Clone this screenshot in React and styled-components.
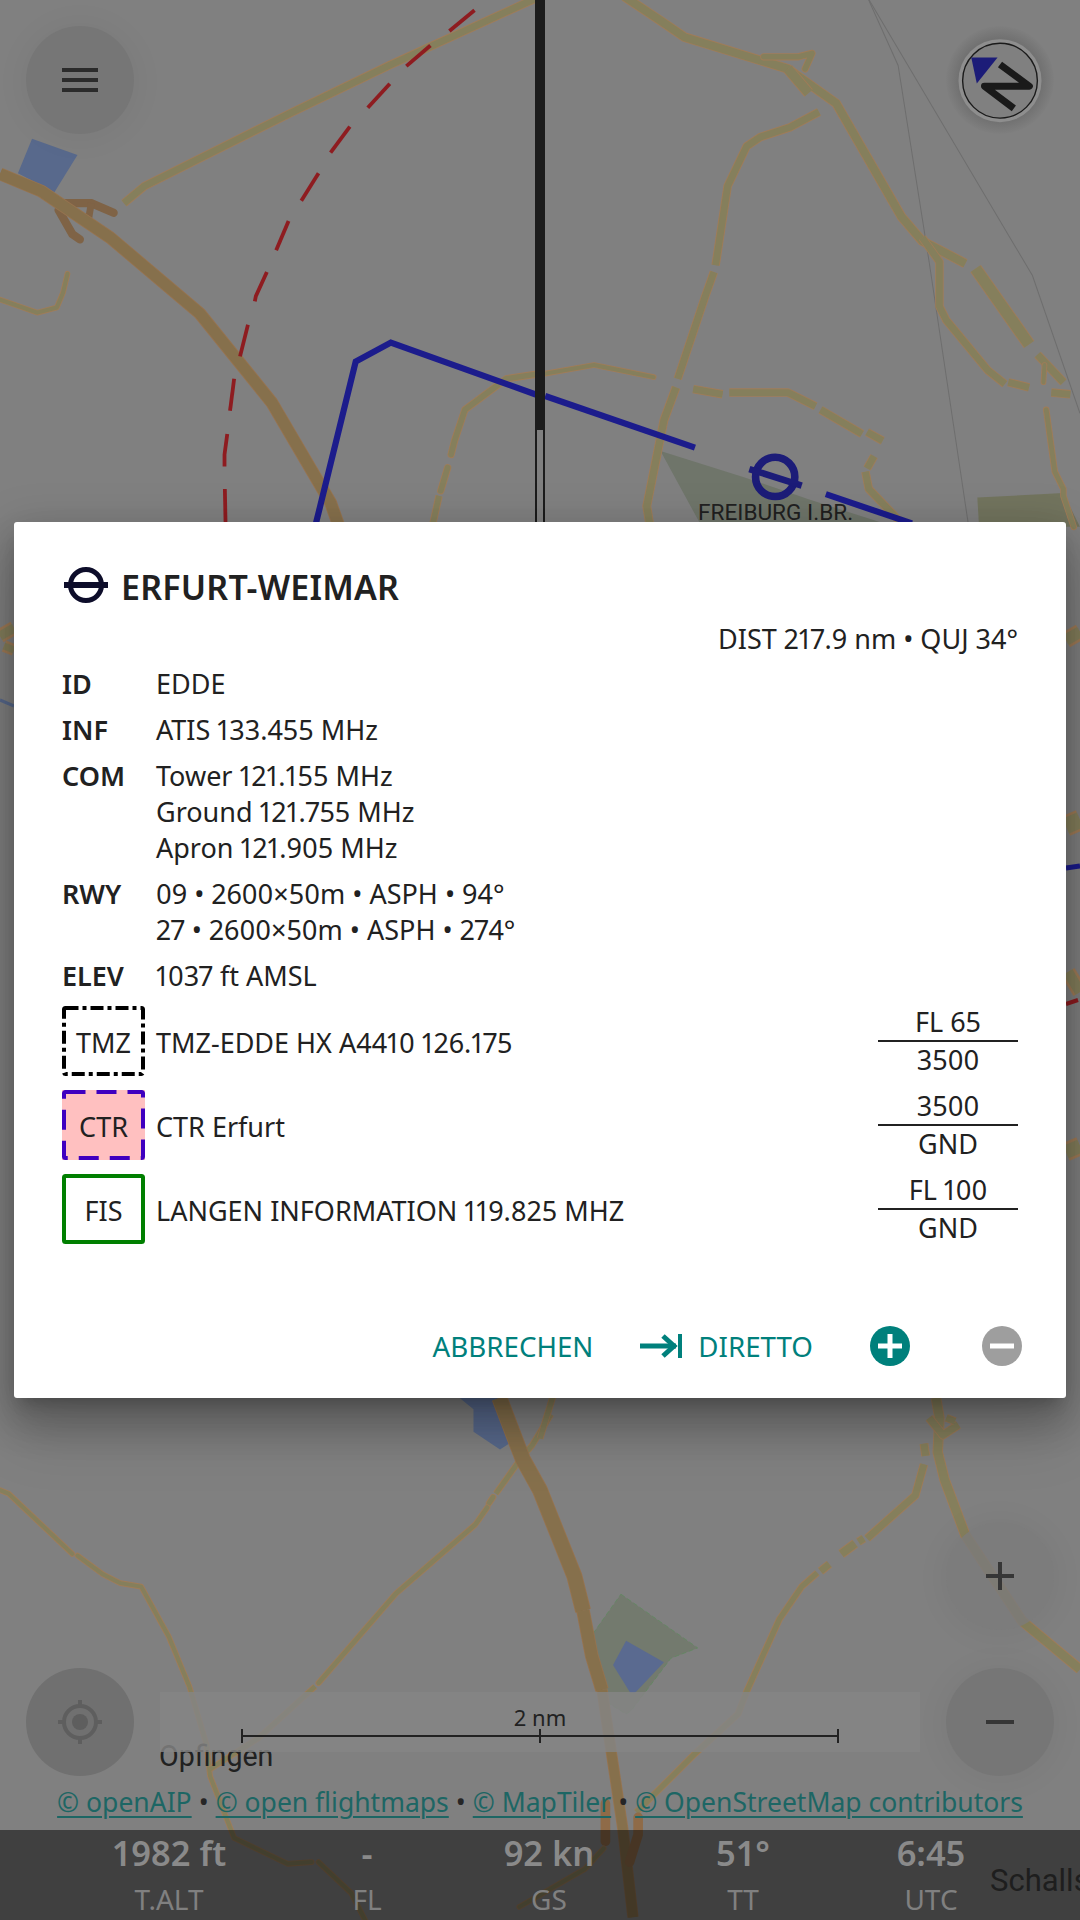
import React from "react";
import styled, { createGlobalStyle } from "styled-components";

const Global = createGlobalStyle`
  html, body { margin: 0; padding: 0; background: #808080; }
  body { font-family: "Noto Sans", "Open Sans", sans-serif; color: #212121; }
  a { color: inherit; }
`;

const Stage = styled.div`
  position: relative;
  width: 1080px;
  height: 1920px;
  overflow: hidden;
  background: #808080;
`;

const MapCanvas = styled.svg`
  position: absolute;
  inset: 0;
  display: block;
`;

const Hud = styled.div`
  position: absolute;
  inset: 0;
  display: flex;
  flex-direction: column;
`;

const TopRow = styled.div`
  display: flex;
  justify-content: space-between;
  align-items: center;
  padding: 26px 26px 0;
`;

const Spacer = styled.div`
  flex: 1;
`;

const RoundButton = styled.div`
  width: 108px;
  height: 108px;
  border-radius: 50%;
  display: flex;
  align-items: center;
  justify-content: center;
  flex: none;
  background: ${(p) => p.$bg || "rgba(116,116,116,.88)"};
  box-shadow: ${(p) => (p.$flat ? "none" : "0 2px 24px 10px rgba(0,0,0,.03)")};
`;

const CompassButton = styled.div`
  width: 108px;
  height: 108px;
  border-radius: 50%;
  display: flex;
  align-items: center;
  justify-content: center;
  background: radial-gradient(circle, rgba(110,110,110,.8) 55%, rgba(128,128,128,0) 72%);
`;

const PlusRow = styled.div`
  display: flex;
  justify-content: flex-end;
  padding: 0 26px;
  margin-bottom: 38px;
`;

const ControlRow = styled.div`
  display: flex;
  align-items: center;
  gap: 26px;
  padding: 0 26px;
  height: 108px;
`;

const ScaleBox = styled.div`
  flex: 1;
  height: 60px;
  background: rgba(133, 133, 133, 0.82);
  position: relative;
  display: flex;
  flex-direction: column;
  align-items: center;
`;

const ScaleLabel = styled.div`
  font-size: 22px;
  line-height: 28px;
  margin-top: 11px;
  color: #212121;
`;

const ScaleRule = styled.div`
  position: relative;
  width: 596px;
  height: 2px;
  margin-top: 4px;
  background: #212121;
`;

const ScaleTick = styled.span`
  position: absolute;
  top: -6px;
  left: ${(p) => p.$at}%;
  width: 2px;
  height: 14px;
  margin-left: -1px;
  background: #212121;
`;

const Attribution = styled.div`
  height: 54px;
  display: flex;
  align-items: center;
  justify-content: center;
  font-size: 26.5px;
  color: #262626;
  white-space: nowrap;
  padding-bottom: 2px;
  box-sizing: border-box;
`;

const AttrLink = styled.a`
  color: #1d6664;
  text-decoration: underline;
  text-decoration-thickness: 2px;
  text-underline-offset: 4px;
  margin: 0 7px;
`;

const StatusBar = styled.div`
  height: 90px;
  flex: none;
  padding-left: 70px;
  display: grid;
  grid-template-columns: 198px 198px 166px 222px 154px;
  background: rgba(0, 0, 0, 0.5);
`;

const Stat = styled.div`
  text-align: center;
  color: #8a8a8a;
`;

const StatValue = styled.div`
  font-size: 34.5px;
  font-weight: 600;
  line-height: 44px;
  margin-top: 1px;
  white-space: nowrap;
`;

const StatLabel = styled.div`
  font-size: 28px;
  line-height: 36px;
  margin-top: 6px;
  color: #808080;
`;

const DialogLayer = styled.div`
  position: absolute;
  inset: 0;
  display: flex;
  align-items: center;
  justify-content: center;
`;

const Dialog = styled.div`
  width: 1052px;
  height: 876px;
  box-sizing: border-box;
  padding-top: 41px;
  display: flex;
  flex-direction: column;
  background: #fff;
  border-radius: 3px;
  font-variant-numeric: proportional-nums;
  box-shadow: 0 11px 15px -7px rgba(0, 0, 0, 0.2), 0 24px 38px 3px rgba(0, 0, 0, 0.14),
    0 9px 46px 8px rgba(0, 0, 0, 0.12), 0 40px 60px 0 rgba(0, 0, 0, 0.12);
`;

const Title = styled.div`
  display: flex;
  align-items: center;
  gap: 13px;
  height: 44px;
  padding: 0 50px;
  font-size: 34px;
  font-weight: 600;
  letter-spacing: 0.2px;
`;

const TitleText = styled.span`
  padding-top: 3px;
`;

const Distance = styled.div`
  margin-top: 14px;
  padding: 0 48px;
  text-align: right;
  font-size: 27px;
  line-height: 36px;
`;

const InfoList = styled.div`
  margin-top: 9px;
  padding: 0 48px;
  display: flex;
  flex-direction: column;
  gap: 10px;
`;

const InfoRow = styled.div`
  display: grid;
  grid-template-columns: 94px 1fr;
  font-size: 27px;
  line-height: 36px;
`;

const InfoKey = styled.div`
  font-weight: 600;
`;

const AirspaceList = styled.div`
  margin-top: 12px;
  padding: 0 48px;
  display: flex;
  flex-direction: column;
  gap: 14px;
`;

const AirspaceRow = styled.div`
  display: grid;
  grid-template-columns: 83px 1fr 140px;
  column-gap: 11px;
  align-items: center;
  height: 70px;
  font-size: 27px;
`;

const AirspaceName = styled.div`
  padding-top: 2px;
`;

const Badge = styled.div`
  position: relative;
  height: 70px;
  box-sizing: border-box;
  padding-top: 2px;
  display: flex;
  align-items: center;
  justify-content: center;
  background: ${(p) => p.$fill || "transparent"};
`;

const BadgeFrame = styled.svg`
  position: absolute;
  inset: 0;
`;

const Limits = styled.div`
  text-align: center;
`;

const LimitTop = styled.div`
  border-bottom: 2px solid #212121;
  height: 34px;
  line-height: 32px;
`;

const LimitBottom = styled.div`
  height: 34px;
  line-height: 36px;
`;

const Footer = styled.div`
  margin-top: auto;
  height: 40px;
  margin-bottom: 32px;
  padding-right: 44px;
  display: flex;
  justify-content: flex-end;
  align-items: center;
`;

const TextAction = styled.div`
  display: flex;
  align-items: center;
  gap: 16px;
  margin-right: ${(p) => p.$after}px;
  color: #00807c;
  font-size: 27.7px;
  white-space: nowrap;
`;

const CircleAction = styled.div`
  position: relative;
  width: 40px;
  height: 40px;
  border-radius: 50%;
  margin-right: ${(p) => p.$after || 0}px;
  background: ${(p) => p.$bg};
  display: flex;
  align-items: center;
  justify-content: center;
`;

const Road = ({ p, w = 14, c = "#857f5c", e = "#a07c58", cap = "butt" }) => (
  <>
    <polyline points={p} fill="none" stroke={e} strokeWidth={w * 1.15 + 5} strokeLinecap={cap} strokeLinejoin="round" />
    <polyline points={p} fill="none" stroke={c} strokeWidth={w * 1.15} strokeLinecap={cap} strokeLinejoin="round" />
  </>
);

const Line = ({ p, w, c, cap = "butt" }) => (
  <polyline points={p} fill="none" stroke={c} strokeWidth={w} strokeLinecap={cap} strokeLinejoin="miter" />
);

const S = 1 / 2.904;
const BROWN = "#86704c";
const BROWN_EDGE = "#96734f";
const BLUE = "#1c1c8c";
const RED = "#8e1c20";

const redDashes = [
  "1378,30 1305,90", "1250,132 1180,192", "1132,243 1068,313", "1016,368 960,443", "925,503 875,583",
  "838,642 802,727", "775,790 743,860 740,875", "720,943 697,1035", "680,1100 668,1193",
  "660,1260 652,1320 652,1355", "653,1420 655,1520",
];

const q1 = () => (
  <g transform={`scale(${S})`}>
    <polygon points="93,403 225,450 158,558 52,503" fill="#58698c" />
    <Road p="360,590 420,540 600,450 850,325 1130,190 1600,-25" w={17} />
    <Line p="170,590 265,590 330,618" w={24} c="#7f6346" cap="round" />
    <Line p="265,590 255,650" w={20} c="#7f6346" />
    <Line p="170,610 210,680 232,695" w={24} c="#7f6346" cap="round" />
    <Road p="0,505 120,555 320,690 580,910 790,1170 960,1460 985,1530" w={28} c={BROWN} e={BROWN_EDGE} />
    <Road p="196,795 183,850 165,893 108,908 0,870" w={10} cap="round" />
    <Road p="1568,1085 1470,1100 1350,1190 1320,1280 1310,1320" w={14} cap="round" />
    <Road p="1300,1358 1280,1425" w={14} cap="round" />
    <Road p="1275,1440 1255,1530" w={14} />
    {redDashes.map((d) => (
      <Line key={d} p={d} w={11} c={RED} />
    ))}
    <Line p="915,1530 1033,1050 1135,995 1568,1150" w={18} c={BLUE} />
  </g>
);

const q2 = () => (
  <g transform={`translate(540,0) scale(${S})`}>
    <polygon points="350,1310 590,1385 780,1450 1000,1520 470,1530" fill="#6f756a" />
    <polygon points="1270,1445 1520,1432 1568,1530 1275,1530" fill="#72745e" />
    <Line p="950,-10 1040,190 1130,760 1245,1530" w={3} c="#6e6e6e" />
    <Line p="950,-10 1430,800 1568,1200" w={3} c="#6e6e6e" />
    <Road p="245,-10 350,60 420,108 720,200 860,300 1050,630 1110,700 1235,765" w={20} />
    <Road p="1265,780 1420,1000" w={28} />
    <Road p="1445,1030 1520,1110" w={18} />
    <Road p="650,165 750,165 790,155 770,200" w={14} cap="round" />
    <Road p="720,200 780,270" w={24} />
    <Road p="810,325 725,370 640,398 600,425 545,540 510,770" w={17} />
    <Road p="505,790 480,860 400,1100" w={17} />
    <Road p="395,1125 360,1220 310,1470 320,1530" w={18} />
    <Road p="15,1085 157,1060 330,1095" w={10} cap="round" />
    <Road p="445,1130 530,1145" w={17} />
    <Road p="550,1140 720,1140 800,1180" w={17} />
    <Road p="815,1190 935,1260" w={17} />
    <Road p="950,1255 995,1280" w={17} />
    <Road p="970,1325 950,1360" w={17} />
    <Road p="945,1370 955,1420 1060,1530" w={17} />
    <Road p="1110,690 1160,760 1160,890 1180,930 1300,1075 1350,1115" w={17} />
    <Road p="1360,1110 1420,1125" w={17} />
    <Road p="1485,1140 1540,1145" w={17} />
    <Road p="1465,1060 1462,1110" w={10} cap="round" />
    <Road p="1470,1190 1495,1370 1520,1420 1520,1440 1550,1530" w={12} cap="round" />
    <Line p="15,1150 450,1300" w={18} c={BLUE} />
    <Line p="830,1435 1080,1520" w={18} c={BLUE} />
    <circle cx="683" cy="1385" r="57" fill="none" stroke="#1c1c78" strokeWidth="22" />
    <Line p="608,1362 760,1410" w={19} c="#1c1c78" />
  </g>
);

const q3 = () => (
  <g transform={`translate(0,1380) scale(${S})`}>
    <polygon points="1335,52 1375,85 1375,150 1452,202 1488,178 1450,52" fill="#58698c" />
    <Road p="0,320 25,330 210,505" w={10} cap="round" />
    <Road p="225,510 300,565 350,590 410,600 490,745 550,890 600,1060 610,1150 680,1330 835,1405 905,1400" w={10} cap="round" />
    <Road p="925,1400 1020,1490 1060,1568" w={10} cap="round" />
    <Road p="1600,100 1545,190 1515,225 1440,330" w={12} />
    <Road p="1432,340 1420,358" w={12} cap="round" />
    <Road p="1415,370 1380,420 1150,620 925,880" w={11} cap="round" />
    <Road p="915,890 750,1040 610,1130" w={11} />
    <text x="462" y="1120" fontFamily="Roboto, sans-serif" fontSize="83" fill="#212121">Opfingen</text>
  </g>
);

const q4 = () => (
  <g transform={`translate(540,1380) scale(${S})`}>
    <polygon points="235,622 458,778 380,808 265,960 250,970 185,930 155,735" fill="#737a6e" stroke="#5c8a5c" strokeWidth="2" strokeDasharray="14 8" />
    <polygon points="250,757 360,820 275,910 262,908 212,828" fill="#5a6a90" />
    <Road p="-118,52 -50,230 0,320 100,570 125,670" w={36} c={BROWN} e={BROWN_EDGE} />
    <Road p="125,670 150,800 180,900" w={30} c={BROWN} e={BROWN_EDGE} />
    <Road p="180,900 240,1300 270,1560" w={24} c={BROWN} e={BROWN_EDGE} />
    <Road p="40,40 0,170" w={13} />
    <Road p="1150,52 1160,110 1155,210 1175,290 1235,450 1400,700 1568,840" w={22} />
    <Road p="1130,110 1170,160 1215,130" w={18} />
    <Road p="1180,110 1205,120" w={16} />
    <Road p="1115,185 1120,220" w={18} />
    <Road p="1115,245 1090,335 950,460" w={17} />
    <Road p="940,460 925,470" w={17} />
    <Road p="915,475 875,505" w={20} />
    <Road p="840,535 815,555" w={17} />
    <Road p="805,560 760,600 695,695 600,905 575,970 450,1085 280,1255" w={13} />
    <Line p="190,1230 190,1340" w={28} c="#8f6b48" cap="round" />
    <Line p="285,1270 285,1320 260,1400" w={28} c="#8f6b48" cap="round" />
    <Road p="185,1360 130,1420 -60,1530" w={10} cap="round" />
  </g>
);

const MapLayer = () => (
  <MapCanvas width="1080" height="1920" viewBox="0 0 1080 1920">
    <Road p="1066,640 1080,632" w={10} />
    <Road p="1066,826 1080,820" w={14} />
    <Road p="1066,1152 1080,1146" w={12} />
    <Line p="1066,868 1080,866" w={5} c={BLUE} />
    <Line p="1066,1004 1078,1000" w={4} c={RED} />
    <Road p="1068,972 1080,992" w={9} />
    <Road p="0,636 14,628" w={8} />
    <Road p="4,646 14,650" w={6} />
    <Line p="0,700 14,706" w={3} c="#58698c" />
    {q1()}
    {q2()}
    {q3()}
    {q4()}
    <rect x="535" y="0" width="10" height="523" fill="#1c1c1c" />
    <rect x="537" y="430" width="6" height="93" fill="#808080" />
    <text x="698" y="520" fontFamily="Roboto, sans-serif" fontSize="22.6" fill="#212121">FREIBURG I.BR.</text>
    <text x="990" y="1891" fontFamily="Roboto, sans-serif" fontSize="31" fill="#3c3c3c">Schallstadt</text>
  </MapCanvas>
);

const MenuIcon = () => (
  <svg width="36" height="24" viewBox="0 0 36 24">
    <path d="M0 2h36M0 12h36M0 22h36" stroke="#2b2b2b" strokeWidth="4" />
  </svg>
);

const Compass = () => (
  <svg width="90" height="90" viewBox="1205 100 260 260">
    <circle cx="1335" cy="232" r="120" fill="#8e8e8e" />
    <circle cx="1335" cy="232" r="108" fill="#808080" stroke="#1a1a1a" strokeWidth="4" />
    <polygon points="1252,165 1328,165 1268,240" fill="#1c1c78" />
    <polyline points="1335,185 1420,248 1290,248 1375,312" fill="none" stroke="#1a1a1a" strokeWidth="20" strokeLinejoin="round" />
  </svg>
);

const LocateIcon = () => (
  <svg width="44" height="44" viewBox="0 0 44 44" fill="none" stroke="#5e5e5e">
    <circle cx="22" cy="22" r="16" strokeWidth="4" />
    <circle cx="22" cy="22" r="8" fill="#5e5e5e" stroke="none" />
    <path d="M22 0v7M22 37v7M0 22h7M37 22h7" strokeWidth="4" />
  </svg>
);

const ZoomIcon = ({ plus }) => (
  <svg width="28" height="28" viewBox="0 0 28 28">
    <path d={plus ? "M0 14h28M14 0v28" : "M0 14h28"} stroke="#363636" strokeWidth="4" />
  </svg>
);

const AirportIcon = () => (
  <svg width="44" height="36" viewBox="0 0 44 36" fill="none" stroke="#0d0d2a">
    <circle cx="22" cy="18" r="15.5" strokeWidth="5" />
    <path d="M0 18h44" strokeWidth="6" />
  </svg>
);

const DirectIcon = () => (
  <svg width="42" height="24" viewBox="0 0 42 24" fill="none" stroke="#00807c">
    <path d="M0 12h36" strokeWidth="5" />
    <path d="M23 2l11 10-11 10" strokeWidth="5" />
    <path d="M40 0v24" strokeWidth="4" />
  </svg>
);

const Glyph = ({ plus }) => (
  <svg width="24" height="24" viewBox="0 0 24 24">
    <path d={plus ? "M0 12h24M12 0v24" : "M0 12h24"} stroke="#fff" strokeWidth="5" />
  </svg>
);

const Frame = ({ color, dash }) => (
  <BadgeFrame width="83" height="70" viewBox="0 0 83 70">
    <rect x="2" y="2" width="79" height="66" rx="1.5" fill="none" stroke={color} strokeWidth="4" strokeDasharray={dash} />
  </BadgeFrame>
);

const info = [
  ["ID", ["EDDE"]],
  ["INF", ["ATIS 133.455 MHz"]],
  ["COM", ["Tower 121.155 MHz", "Ground 121.755 MHz", "Apron 121.905 MHz"]],
  ["RWY", ["09 • 2600×50m • ASPH • 94°", "27 • 2600×50m • ASPH • 274°"]],
  ["ELEV", ["1037 ft AMSL"]],
];

const airspaces = [
  { code: "TMZ", name: "TMZ-EDDE HX A4410 126.175", top: "FL 65", bottom: "3500", color: "#000", dash: "13 4 4 4" },
  { code: "CTR", name: "CTR Erfurt", top: "3500", bottom: "GND", color: "#3f00c0", dash: "20 11", fill: "#ffc0c0" },
  { code: "FIS", name: "LANGEN INFORMATION 119.825 MHZ", top: "FL 100", bottom: "GND", color: "#007f00" },
];

const stats = [
  ["1982 ft", "T.ALT"],
  ["-", "FL"],
  ["92 kn", "GS"],
  ["51°", "TT"],
  ["6:45", "UTC"],
];

const links = ["© openAIP", "© open flightmaps", "© MapTiler", "© OpenStreetMap contributors"];

export default function App() {
  return (
    <Stage>
      <Global />
      <MapLayer />
      <Hud>
        <TopRow>
          <RoundButton>
            <MenuIcon />
          </RoundButton>
          <CompassButton>
            <Compass />
          </CompassButton>
        </TopRow>
        <Spacer />
        <PlusRow>
          <RoundButton $bg="rgba(122,122,122,.8)">
            <ZoomIcon plus />
          </RoundButton>
        </PlusRow>
        <ControlRow>
          <RoundButton $flat $bg="#707070">
            <LocateIcon />
          </RoundButton>
          <ScaleBox>
            <ScaleLabel>2 nm</ScaleLabel>
            <ScaleRule>
              <ScaleTick $at={0} />
              <ScaleTick $at={50} />
              <ScaleTick $at={100} />
            </ScaleRule>
          </ScaleBox>
          <RoundButton>
            <ZoomIcon />
          </RoundButton>
        </ControlRow>
        <Attribution>
          {links.map((l, i) => (
            <React.Fragment key={l}>
              {i > 0 && "•"}
              <AttrLink href="#">{l}</AttrLink>
            </React.Fragment>
          ))}
        </Attribution>
        <StatusBar>
          {stats.map(([v, l]) => (
            <Stat key={l}>
              <StatValue>{v}</StatValue>
              <StatLabel>{l}</StatLabel>
            </Stat>
          ))}
        </StatusBar>
      </Hud>
      <DialogLayer>
        <Dialog>
          <Title>
            <AirportIcon />
            <TitleText>ERFURT-WEIMAR</TitleText>
          </Title>
          <Distance>DIST 217.9 nm • QUJ 34°</Distance>
          <InfoList>
            {info.map(([k, lines]) => (
              <InfoRow key={k}>
                <InfoKey>{k}</InfoKey>
                <div>
                  {lines.map((t) => (
                    <div key={t}>{t}</div>
                  ))}
                </div>
              </InfoRow>
            ))}
          </InfoList>
          <AirspaceList>
            {airspaces.map((a) => (
              <AirspaceRow key={a.code}>
                <Badge $fill={a.fill}>
                  <Frame color={a.color} dash={a.dash} />
                  {a.code}
                </Badge>
                <AirspaceName>{a.name}</AirspaceName>
                <Limits>
                  <LimitTop>{a.top}</LimitTop>
                  <LimitBottom>{a.bottom}</LimitBottom>
                </Limits>
              </AirspaceRow>
            ))}
          </AirspaceList>
          <Footer>
            <TextAction $after={47}>ABBRECHEN</TextAction>
            <TextAction $after={57}>
              <DirectIcon />
              DIRETTO
            </TextAction>
            <CircleAction $bg="#00807c" $after={72}>
              <Glyph plus />
            </CircleAction>
            <CircleAction $bg="#9e9e9e">
              <Glyph />
            </CircleAction>
          </Footer>
        </Dialog>
      </DialogLayer>
    </Stage>
  );
}
